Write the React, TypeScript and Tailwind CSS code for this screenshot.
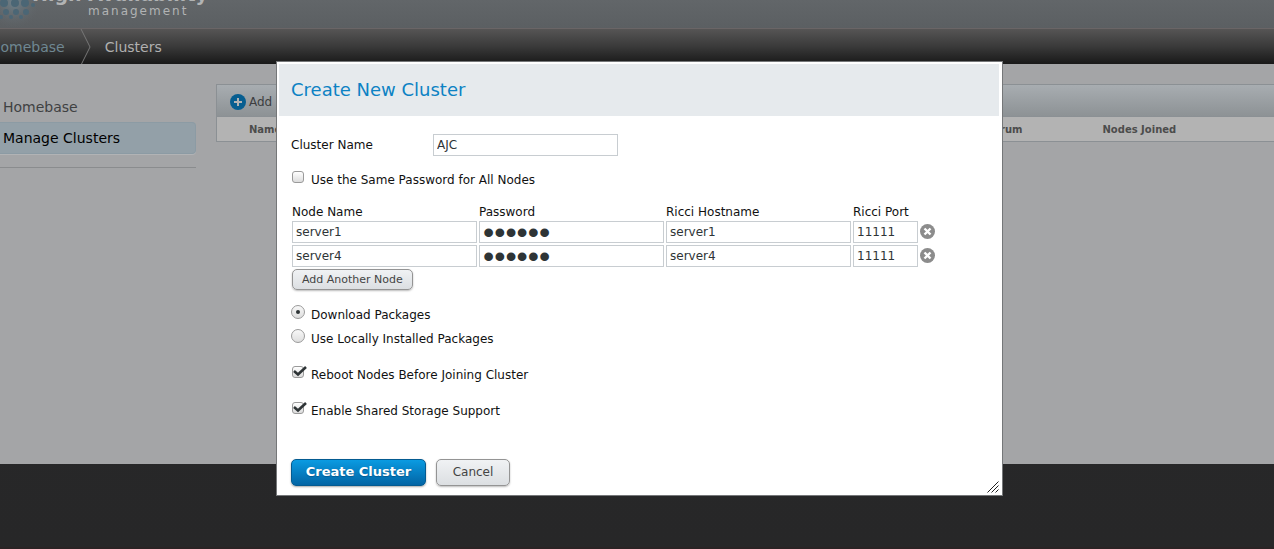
import React, { useState } from 'react';

interface NodeRow {
  id: number;
  name: string;
  password: string;
  hostname: string;
  port: string;
}

const initialNodes: NodeRow[] = [
  { id: 1, name: 'server1', password: 'secret', hostname: 'server1', port: '11111' },
  { id: 2, name: 'server4', password: 'secret', hostname: 'server4', port: '11111' }
];

const logoDots = [
  { x: 4, y: 3, r: 4 },
  { x: 15, y: 3, r: 4 },
  { x: 25, y: 3, r: 4 },
  { x: 33, y: 5, r: 2 },
  { x: 6, y: 12, r: 3 },
  { x: 16, y: 12, r: 3 },
  { x: 26, y: 12, r: 3 },
  { x: 1, y: 17, r: 2 },
  { x: 11, y: 17, r: 2 },
  { x: 21, y: 17, r: 2 }
];

const inputClass =
  'block h-[22px] border border-[#c8cdd1] bg-white px-[3px] leading-4 text-[#2e3436] outline-none';

const Header: React.FC = () => (
  <header className="flex h-7 overflow-hidden bg-linear-to-b from-[#626669] to-[#5b5f62]">
    <svg className="h-7 w-10 shrink-0" viewBox="0 0 40 28" aria-hidden="true">
      <defs>
        <radialGradient id="glow" cx="14" cy="2" r="26" gradientUnits="userSpaceOnUse">
          <stop offset="0" stopColor="#6f828c" />
          <stop offset="1" stopColor="#61666a" stopOpacity="0" />
        </radialGradient>
      </defs>
      <rect width="40" height="28" fill="url(#glow)" />
      {logoDots.map((dot) => (
        <circle key={`${dot.x}-${dot.y}`} cx={dot.x} cy={dot.y} r={dot.r} fill="#4b6675" />
      ))}
    </svg>
    <div className="-mt-4 -ml-2 text-[#b1b3b4]">
      <div className="text-[19px] leading-5 font-bold whitespace-nowrap">High Availability</div>
      <div className="pl-14 text-[12px] leading-[14px] tracking-[2px]">management</div>
    </div>
  </header>
);

const Breadcrumb: React.FC = () => (
  <nav className="flex h-9 items-center border-t border-[#6a6566] bg-linear-to-b from-[#565555] via-[#3a3a3a] to-[#191919] pt-px text-[14px]">
    <a href="#home" className="-ml-2.5 text-[#6f8792]">Homebase</a>
    <svg className="ml-[15px] h-9 w-3" viewBox="0 0 12 36" fill="none" aria-hidden="true">
      <path d="M1 0 L10 18 L1 36" stroke="#777" />
    </svg>
    <a href="#clusters" className="ml-[13px] text-[#b0b0b0]">Clusters</a>
  </nav>
);

const SideNav: React.FC = () => (
  <nav className="w-[196px] shrink-0 pt-[27px] text-[14px]">
    <a href="#home" className="block h-[31px] pl-[3px] leading-8 text-[#3f4142]">Homebase</a>
    <a
      href="#manage"
      className="block h-8 rounded-r-sm border border-l-0 border-[#8c9ba4] bg-[#93a0a8] pl-[3px] leading-[31px] text-black shadow-[0_1px_0_#b1b3b5]"
    >
      Manage Clusters
    </a>
    <hr className="mt-[13px] border-[#8a8c8e]" />
  </nav>
);

const ClusterTable: React.FC = () => (
  <section className="ml-5 min-w-0 flex-1 pt-5">
    <div className="flex h-[33px] items-center border border-r-0 border-[#8b9094] bg-linear-to-b from-[#a8adb1] to-[#8d9295] pt-0.5 pl-[13px]">
      <button className="flex items-center gap-[3px] text-[12px] text-[#3c3e40]">
        <svg className="h-4 w-4" viewBox="0 0 16 16" aria-hidden="true">
          <circle cx="8" cy="8" r="8" fill="#075e90" />
          <path d="M8 4v8M4 8h8" stroke="#b3b3b3" strokeWidth="2" />
        </svg>
        Add
      </button>
    </div>
    <table className="w-full border border-t-0 border-r-0 border-[#8b9094] bg-[#b3b3b3] text-left text-[10px] text-[#4c4c4c]">
      <thead>
        <tr className="h-6">
          <th scope="col" className="w-[717px] pt-0.5 pl-8">Name</th>
          <th scope="col" className="w-[169px] pt-0.5"><span className="block pl-11">Quorum</span></th>
          <th scope="col" className="pt-0.5">Nodes Joined</th>
        </tr>
      </thead>
    </table>
  </section>
);

interface OptionProps {
  id: string;
  label: string;
  checked: boolean;
  onChange: () => void;
}

const CheckOption: React.FC<OptionProps> = ({ id, label, checked, onChange }) => (
  <div className="flex h-6 items-center">
    <span className="relative mb-1.5 h-3 w-5 shrink-0">
      <input
        id={id}
        type="checkbox"
        checked={checked}
        onChange={onChange}
        className="ml-px block h-3 w-3 appearance-none rounded-[3px] border border-[#9a9a9a] bg-linear-to-b from-white to-[#dcdcdc]"
      />
      {checked && (
        <svg className="pointer-events-none absolute top-0 left-0 h-3 w-4" viewBox="0 0 16 12" fill="none" aria-hidden="true">
          <path d="M3 5L7 8.5L15 1" stroke="#2e3436" strokeWidth="2.6" />
        </svg>
      )}
    </span>
    <label htmlFor={id}>{label}</label>
  </div>
);

const RadioOption: React.FC<OptionProps> = ({ id, label, checked, onChange }) => (
  <div className="flex h-6 items-center">
    <span className="relative mb-1.5 h-3.5 w-5 shrink-0">
      <input
        id={id}
        type="radio"
        name="packages"
        checked={checked}
        onChange={onChange}
        className="block h-3.5 w-3.5 appearance-none rounded-full border border-[#9a9a9a] bg-linear-to-b from-[#f8f8f8] to-[#dedede]"
      />
      {checked && <span className="pointer-events-none absolute top-[5px] left-[5px] h-1 w-1 rounded-full bg-[#2e3436]" />}
    </span>
    <label htmlFor={id}>{label}</label>
  </div>
);

const CreateClusterDialog: React.FC = () => {
  const [clusterName, setClusterName] = useState('AJC');
  const [nodes, setNodes] = useState(initialNodes);
  const [samePassword, setSamePassword] = useState(false);
  const [download, setDownload] = useState(true);
  const [reboot, setReboot] = useState(true);
  const [sharedStorage, setSharedStorage] = useState(true);

  const updateNode = (id: number, field: keyof NodeRow, value: string) => {
    setNodes(nodes.map((node) => (node.id === id ? { ...node, [field]: value } : node)));
  };

  const addNode = () => {
    setNodes([...nodes, { id: Date.now(), name: '', password: '', hostname: '', port: '11111' }]);
  };

  return (
    <div
      role="dialog"
      aria-labelledby="dialog-title"
      className="relative w-[727px] border border-[#757779] bg-white p-0.5 pr-[3px] text-[12px] leading-4 text-[#111]"
    >
      <div className="flex h-[52px] items-center bg-[#e6eaed] pl-3">
        <h1 id="dialog-title" className="text-[18px] font-medium text-[#0c82c4]">Create New Cluster</h1>
      </div>

      <form className="px-3 pt-[18px] pb-[7px]" onSubmit={(e) => e.preventDefault()}>
        <div className="flex items-center">
          <label htmlFor="cluster-name" className="w-[142px]">Cluster Name</label>
          <input
            id="cluster-name"
            value={clusterName}
            onChange={(e) => setClusterName(e.target.value)}
            className={`${inputClass} w-[185px]`}
          />
        </div>

        <div className="mt-3">
          <CheckOption
            id="same-password"
            label="Use the Same Password for All Nodes"
            checked={samePassword}
            onChange={() => setSamePassword(!samePassword)}
          />
        </div>

        <table className="mt-3 ml-px text-left">
          <thead>
            <tr>
              <th scope="col" className="w-[187px] font-normal">Node Name</th>
              <th scope="col" className="w-[187px] font-normal">Password</th>
              <th scope="col" className="w-[187px] font-normal">Ricci Hostname</th>
              <th scope="col" className="w-[67px] font-normal">Ricci Port</th>
              <td />
            </tr>
          </thead>
          <tbody>
            {nodes.map((node) => (
              <tr key={node.id}>
                <td className="pt-px pb-px">
                  <input aria-label="Node Name" value={node.name} onChange={(e) => updateNode(node.id, 'name', e.target.value)} className={`${inputClass} w-[185px]`} />
                </td>
                <td>
                  <input aria-label="Password" type="password" value={node.password} onChange={(e) => updateNode(node.id, 'password', e.target.value)} className={`${inputClass} w-[185px] font-['Liberation_Sans',sans-serif] text-[32px]`} />
                </td>
                <td>
                  <input aria-label="Ricci Hostname" value={node.hostname} onChange={(e) => updateNode(node.id, 'hostname', e.target.value)} className={`${inputClass} w-[185px]`} />
                </td>
                <td>
                  <input aria-label="Ricci Port" value={node.port} onChange={(e) => updateNode(node.id, 'port', e.target.value)} className={`${inputClass} w-[65px]`} />
                </td>
                <td className="pb-0.5">
                  <button type="button" aria-label="Remove node" className="block" onClick={() => setNodes(nodes.filter((n) => n.id !== node.id))}>
                    <svg className="h-[15px] w-[15px]" viewBox="0 0 15 15" aria-hidden="true">
                      <circle cx="7.5" cy="7.5" r="7.5" fill="#8c8c8c" />
                      <path d="M4.5 4.5l6 6M10.5 4.5l-6 6" stroke="#fff" strokeWidth="2.4" />
                    </svg>
                  </button>
                </td>
              </tr>
            ))}
          </tbody>
        </table>

        <button
          type="button"
          onClick={addNode}
          className="mt-px ml-px block h-[21px] rounded-[5px] border border-[#949494] bg-linear-to-b from-[#f0f2f4] to-[#dcdfe2] px-[9px] text-[11px] leading-4 text-[#444] shadow-[0_1px_2px_#bbb]"
        >
          Add Another Node
        </button>

        <div className="mt-[13px]">
          <RadioOption id="download" label="Download Packages" checked={download} onChange={() => setDownload(true)} />
          <RadioOption id="local" label="Use Locally Installed Packages" checked={!download} onChange={() => setDownload(false)} />
        </div>

        <div className="mt-3 space-y-3">
          <CheckOption id="reboot" label="Reboot Nodes Before Joining Cluster" checked={reboot} onChange={() => setReboot(!reboot)} />
          <CheckOption id="storage" label="Enable Shared Storage Support" checked={sharedStorage} onChange={() => setSharedStorage(!sharedStorage)} />
        </div>

        <div className="mt-9 flex gap-2.5">
          <button
            type="submit"
            className="h-[27px] w-[135px] rounded-[5px] border border-[#045b91] bg-linear-to-b from-[#0b9be2] to-[#0365a5] pb-0.5 text-[13px] leading-4 font-bold text-white shadow-[0_1px_2px_#aaa] text-shadow-[0_1px_1px_#045b91]"
          >
            Create Cluster
          </button>
          <button
            type="button"
            className="h-[27px] w-[74px] rounded-[5px] border border-[#949494] bg-linear-to-b from-[#f0f2f4] to-[#dcdfe2] pb-0.5 leading-4 text-[#444] shadow-[0_1px_2px_#bbb]"
          >
            Cancel
          </button>
        </div>
      </form>

      <svg className="absolute right-[3px] bottom-[2px] h-3 w-3" viewBox="0 0 12 12" stroke="#222" aria-hidden="true">
        <path d="M0.5 11.5l11-11M4.5 11.5l7-7M8.5 11.5l3-3" />
      </svg>
    </div>
  );
};

export default function App() {
  return (
    <div className="flex min-h-screen flex-col overflow-hidden bg-linear-to-b from-[#28292a] to-[#272728] font-['DejaVu_Sans','Noto_Sans',sans-serif]">
      <Header />
      <Breadcrumb />
      <main className="flex min-h-[400px] bg-[#a4a5a7]">
        <SideNav />
        <ClusterTable />
      </main>
      <footer className="flex-1 border-b-2 border-[#2a2324]" />

      {/* Modal layer */}
      <div className="fixed inset-0 flex items-start justify-center pt-[61px] pl-[5px]">
        <CreateClusterDialog />
      </div>
    </div>
  );
}
